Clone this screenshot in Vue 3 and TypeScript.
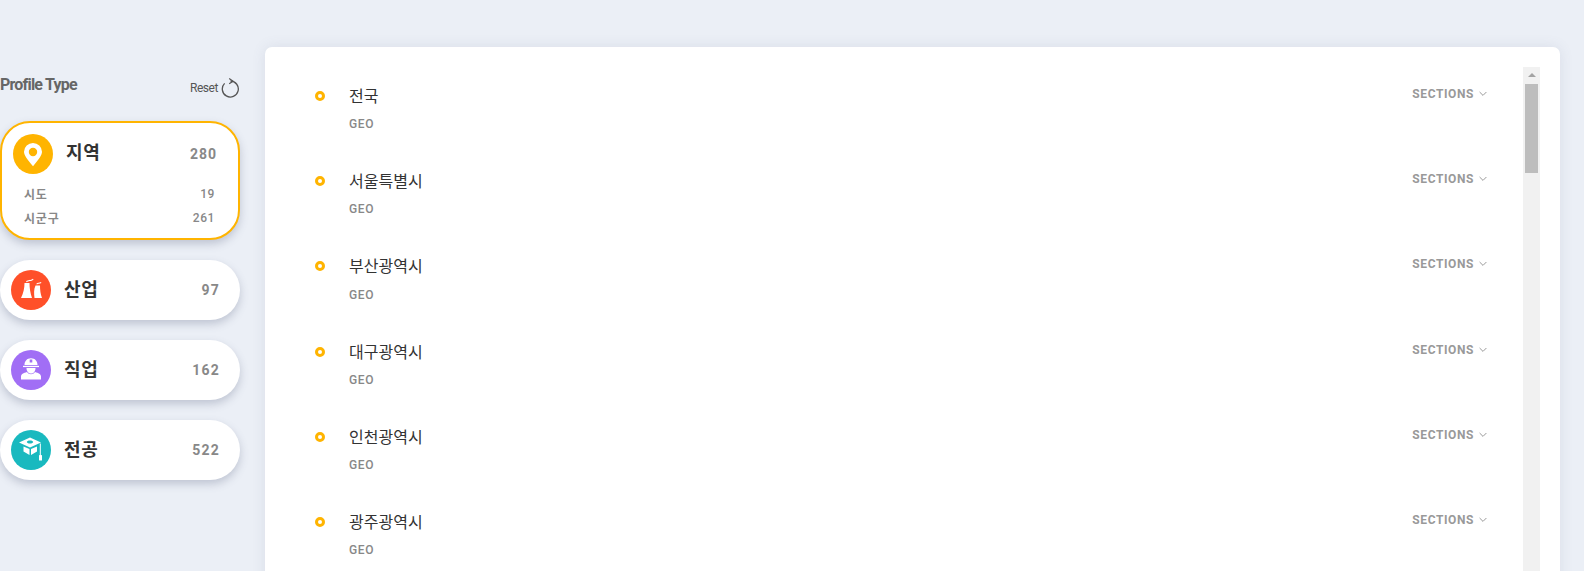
<script setup lang="ts">
interface Extra {
  label: string
  count: number
}

interface ProfileType {
  name: string
  count: number
  color: string
  icon: string
  extras?: Extra[]
}

const types: ProfileType[] = [
  {
    name: '지역',
    count: 280,
    color: '#ffb400',
    icon: 'pin',
    extras: [
      { label: '시도', count: 19 },
      { label: '시군구', count: 261 }
    ]
  },
  { name: '산업', count: 97, color: '#ff5029', icon: 'factory' },
  { name: '직업', count: 162, color: '#a16ef5', icon: 'worker' },
  { name: '전공', count: 522, color: '#19b9bf', icon: 'grad' }
]

const regions = ['전국', '서울특별시', '부산광역시', '대구광역시', '인천광역시', '광주광역시']
</script>

<template>
  <div class="page">
    <aside class="side">
      <div class="side-head">
        <h2 class="side-title">Profile Type</h2>
        <button class="reset">
          Reset
          <svg width="18" height="20" viewBox="0 0 18 20" fill="none" stroke="#555" stroke-width="1.3">
            <path d="M3.600 5.400A8 8 0 1 0 9.500 3" />
            <path d="M8.200 .6 12 3.200 8.200 5.800" stroke-width="1.200" />
          </svg>
        </button>
      </div>
      <div
        v-for="t in types"
        :key="t.name"
        class="type"
        :class="{ active: t.extras }"
      >
        <div class="type-main">
          <span class="type-icon" :style="{ background: t.color }">
            <svg v-if="t.icon === 'pin'" width="40" height="40" viewBox="0 0 40 40">
              <path
                fill="#fff"
                fill-rule="evenodd"
                d="M20 9a9 9 0 0 0-9 8.800c0 3.600 3.200 7.600 9 14.500 5.800-6.900 9-10.900 9-14.500A9 9 0 0 0 20 9Zm0 4.800a4.200 4.200 0 1 1 0 8.400 4.200 4.200 0 0 1 0-8.400Z"
              />
            </svg>
            <svg v-else-if="t.icon === 'factory'" width="40" height="40" viewBox="0 0 40 40" fill="#fff">
              <path d="M13.500 13h5c0 5 .8 10 2.500 15H10c2.500-5 3.500-10 3.500-15Z" />
              <path d="M24.500 15.500H29c0 4.500.5 8.500 2 12.500h-7.500c-.5-4.500-.8-8.500 1-12.500Z" />
              <path d="M15 11.500c2.200-2.300 4.500-.8 7-2.800l.5 1c-2.500 2-5 .7-6.800 2.600ZM25.300 13.700c1.400-1.500 2.800-.5 4.700-1.700l.4 1c-1.800 1.200-3.500.3-4.500 1.500Z" />
            </svg>
            <svg v-else-if="t.icon === 'worker'" width="40" height="40" viewBox="0 0 40 40" fill="#fff">
              <path fill-rule="evenodd" d="M13.500 15c0-4 2.500-6.800 6.500-6.800s6.500 2.800 6.500 6.800ZM18.700 9.500v3h2.600v-3Z" />
              <rect x="12" y="15.800" width="16" height="1.300" />
              <path d="M15.500 18h9c0 3.500-2 5.500-4.500 5.500s-4.500-2-4.500-5.500Z" />
              <path d="M10 29.500v-3c0-2.500 2.500-3.500 6-4.500 1 1.500 2.500 2.200 4 2.200s3-.7 4-2.200c3.500 1 6 2 6 4.500v3Z" />
            </svg>
            <svg v-else width="40" height="40" viewBox="0 0 40 40" fill="#fff">
              <path
                fill-rule="evenodd"
                d="M19 7.500 8 12.500l11 5 11-5Zm0 3c1.800 0 3.200.6 3.200 1.500s-1.400 1.500-3.200 1.500-3.200-.6-3.200-1.500 1.400-1.500 3.200-1.500Z"
              />
              <path d="M12.500 16.500v5l6 3.500v-6ZM26 16.500v5l-6 3.500v-6Z" />
              <rect x="28.800" y="13.500" width="1" height="11.500" />
              <rect x="28" y="25" width="3" height="5.500" rx=".5" />
            </svg>
          </span>
          <span class="type-name">{{ t.name }}</span>
          <span class="type-count">{{ t.count }}</span>
        </div>
        <div v-if="t.extras" class="extras">
          <div v-for="e in t.extras" :key="e.label" class="extra">
            <span>{{ e.label }}</span>
            <span class="extra-count">{{ e.count }}</span>
          </div>
        </div>
      </div>
    </aside>

    <main class="panel">
      <ul class="list">
        <li v-for="r in regions" :key="r" class="row">
          <span class="dot"></span>
          <div class="row-text">
            <div class="row-name">{{ r }}</div>
            <div class="row-kind">GEO</div>
          </div>
          <div class="sections">
            SECTIONS
            <svg width="8" height="6" viewBox="0 0 8 6" fill="none" stroke="#999" stroke-width="1">
              <path d="M.6 1 4 4.400 7.400 1" />
            </svg>
          </div>
        </li>
      </ul>
      <div class="scrollbar">
        <span class="arrow"></span>
        <span class="thumb"></span>
      </div>
    </main>
  </div>
</template>

<style scoped>
.page {
  display: flex;
  align-items: flex-start;
  height: 571px;
  overflow: hidden;
  padding-top: 47px;
  box-sizing: border-box;
  background: #ebeff6;
  font-family: Roboto, 'Noto Sans CJK KR', sans-serif;
}

.side {
  width: 240px;
  flex: none;
  margin-right: 25px;
}

.side-head {
  display: flex;
  justify-content: space-between;
  align-items: center;
  height: 74px;
}

.side-title {
  margin: 1px 0 0;
  font-size: 16px;
  font-weight: 700;
  letter-spacing: -0.8px;
  color: #666;
}

.reset {
  display: flex;
  align-items: center;
  gap: 3px;
  padding: 0;
  margin-top: 7px;
  border: 0;
  background: none;
  font: inherit;
  font-size: 12px;
  letter-spacing: -0.45px;
  color: #555;
}

.reset svg {
  margin-right: 1px;
}

.type {
  box-sizing: border-box;
  width: 240px;
  height: 60px;
  margin-bottom: 20px;
  padding: 10px 20px 0 11px;
  border-radius: 30px;
  background: #fff;
  box-shadow: 0 4px 8px rgba(90, 100, 130, 0.3);
}

.type.active {
  height: 119px;
  padding: 11px 21px 0 11px;
  border: 2px solid #ffb400;
}

.type-main {
  display: flex;
  align-items: center;
  height: 40px;
}

.type-icon {
  display: block;
  width: 40px;
  height: 40px;
  flex: none;
  border-radius: 50%;
}

.type-icon svg {
  display: block;
}

.type-name {
  margin: 0 0 4px 13px;
  font-size: 18px;
  font-weight: 700;
  letter-spacing: 0.8px;
  color: #333;
}

.active .type-name {
  margin-bottom: 6px;
}

.type-count {
  margin: 0 0 1px auto;
  font-size: 14px;
  font-weight: 700;
  letter-spacing: 1.2px;
  color: #888;
}

.active .type-count {
  letter-spacing: 1px;
}

.extras {
  margin-top: 7.5px;
  padding: 0 2px 0 11px;
}

.extra {
  display: flex;
  justify-content: space-between;
  height: 24px;
  align-items: center;
  font-size: 12px;
  font-weight: 700;
  letter-spacing: 0.8px;
  color: #888;
}

.extra-count {
  font-weight: 500;
  letter-spacing: 0.6px;
}

.panel {
  display: flex;
  flex: none;
  width: 1295px;
  height: 560px;
  box-sizing: border-box;
  padding: 20px 20px 0 0;
  border-radius: 7px;
  background: #fff;
  box-shadow: 0 0 14px rgba(90, 100, 130, 0.12);
}

.list {
  flex: 1;
  margin: 0;
  padding: 0;
  list-style: none;
}

.row {
  display: flex;
  align-items: flex-start;
  height: 85.2px;
  padding-left: 50px;
  box-sizing: border-box;
}

.dot {
  box-sizing: border-box;
  width: 10px;
  height: 10px;
  margin-top: 24px;
  border: 3px solid #ffb400;
  border-radius: 50%;
}

.row-text {
  margin-left: 24px;
  padding-top: 18px;
}

.row-name {
  height: 24px;
  line-height: 24px;
  font-size: 16px;
  font-weight: 400;
  color: #333;
}

.row-kind {
  margin-top: 8.2px;
  font-size: 12px;
  font-weight: 500;
  letter-spacing: 0.7px;
  color: #888;
}

.sections {
  display: flex;
  align-items: center;
  gap: 5px;
  height: 14px;
  margin: 20px 36px 0 auto;
  font-size: 12px;
  font-weight: 700;
  letter-spacing: 0.6px;
  color: #999;
}

.scrollbar {
  display: flex;
  flex-direction: column;
  align-items: center;
  flex: none;
  width: 17px;
  height: 540px;
  background: #f1f1f1;
}

.arrow {
  width: 0;
  height: 0;
  margin-top: 6px;
  border-left: 4px solid transparent;
  border-right: 4px solid transparent;
  border-bottom: 4px solid #a3a3a3;
}

.thumb {
  width: 13px;
  height: 89px;
  margin-top: 7px;
  background: #bdbdbd;
}
</style>
